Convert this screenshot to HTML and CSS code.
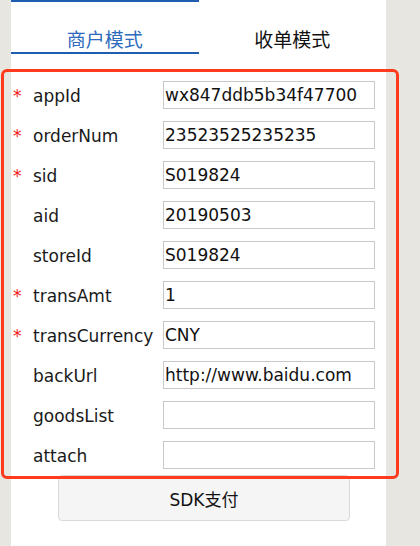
FILE: index.html
```html
<!DOCTYPE html>
<html lang="zh-CN">
<head>
<meta charset="utf-8">
<title>SDK</title>
<link rel="stylesheet" href="styles.css">
</head>
<body>
<div class="panel">
  <div class="tabs">
    <div class="tab active">商户模式</div>
    <div class="tab">收单模式</div>
  </div>
  <div class="form">
    <div class="row"><span class="req">*</span><span class="label">appId</span><input class="field" value="wx847ddb5b34f47700"></div>
    <div class="row"><span class="req">*</span><span class="label">orderNum</span><input class="field" value="23523525235235"></div>
    <div class="row"><span class="req">*</span><span class="label">sid</span><input class="field" value="S019824"></div>
    <div class="row"><span class="req"></span><span class="label">aid</span><input class="field" value="20190503"></div>
    <div class="row"><span class="req"></span><span class="label">storeId</span><input class="field" value="S019824"></div>
    <div class="row"><span class="req">*</span><span class="label">transAmt</span><input class="field" value="1"></div>
    <div class="row"><span class="req">*</span><span class="label">transCurrency</span><input class="field" value="CNY"></div>
    <div class="row"><span class="req"></span><span class="label">backUrl</span><input class="field" value="http://www.baidu.com"></div>
    <div class="row"><span class="req"></span><span class="label">goodsList</span><input class="field" value=""></div>
    <div class="row"><span class="req"></span><span class="label">attach</span><input class="field" value=""></div>
  </div>
  <button class="pay">SDK支付</button>
</div>
<div class="highlight"></div>
</body>
</html>
```
FILE: styles.css
```css
html, body {
  margin: 0;
  padding: 0;
}
body {
  background: #e8e6e1;
  font-family: "DejaVu Sans", "Noto Sans CJK SC", sans-serif;
  color: #1a1a1a;
  position: relative;
  height: 546px;
  overflow: hidden;
}
.panel {
  margin-left: 11px;
  width: 375px;
  height: 546px;
  background: #fff;
}
.tabs {
  display: flex;
}
.tab {
  flex: 1;
  box-sizing: border-box;
  height: 54px;
  border-top: 2px solid transparent;
  border-bottom: 2px solid transparent;
  padding-top: 27px;
  font-family: "Noto Sans CJK SC", sans-serif;
  font-size: 19px;
  line-height: 19px;
  text-align: center;
  color: #111;
}
.tab.active {
  border-color: #1f5db0;
  color: #2e6bbd;
}
.form {
  padding-top: 21px;
}
.row {
  display: flex;
  align-items: center;
  height: 40px;
  padding-left: 2px;
}
.req {
  width: 20px;
  color: #f01a1a;
  font-size: 17px;
  padding-top: 1px;
}
.label {
  width: 130px;
  font-size: 17px;
  color: #1a1a1a;
  white-space: nowrap;
  padding-top: 1px;
}
.field {
  box-sizing: border-box;
  width: 212px;
  height: 28px;
  margin: 0;
  padding: 0 1px;
  border: 1px solid #c8c8c8;
  border-radius: 0;
  font-family: "DejaVu Sans", sans-serif;
  font-size: 17px;
  color: #111;
  background: #fff;
  outline: none;
}
.pay {
  display: block;
  box-sizing: border-box;
  margin: 0 0 0 47px;
  width: 292px;
  height: 46px;
  background: #f5f5f5;
  border: 1px solid #dadada;
  border-radius: 4px;
  font-family: "DejaVu Sans", "Noto Sans CJK SC", sans-serif;
  font-size: 17px;
  color: #111;
  padding: 0;
}
.highlight {
  position: absolute;
  left: 1px;
  top: 69px;
  width: 398px;
  height: 410px;
  box-sizing: border-box;
  border: 3px solid #fe3b1c;
  border-radius: 6px;
  pointer-events: none;
}
```
